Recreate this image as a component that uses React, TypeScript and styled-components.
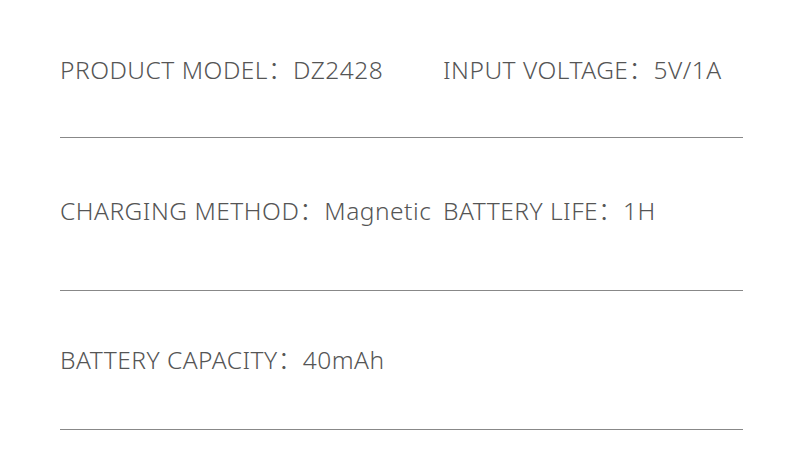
import React from "react";
import styled, { createGlobalStyle } from "styled-components";

const Global = createGlobalStyle`
  html, body { margin: 0; padding: 0; background: #ffffff; }
  body { width: 800px; height: 450px; overflow: hidden; }
`;

const Page = styled.div`
  width: 800px;
  height: 450px;
  box-sizing: border-box;
  padding: 0 57px 0 60px;
  display: flex;
  flex-direction: column;
  font-family: "Noto Sans", "Noto Sans CJK SC", sans-serif;
  color: #555555;
`;

const Row = styled.div<{ $top: number; $bottom: number }>`
  display: grid;
  grid-template-columns: 383px 1fr;
  padding-top: ${(p) => p.$top}px;
  padding-bottom: ${(p) => p.$bottom}px;
  border-bottom: 1.5px solid #888888;
`;

const Item = styled.div`
  font-size: 24.5px;
  line-height: 30px;
  letter-spacing: 0.5px;
  font-weight: 300;
  white-space: nowrap;
`;

const rows = [
  { top: 55, bottom: 52, items: ["PRODUCT MODEL：DZ2428", "INPUT VOLTAGE：5V/1A"] },
  { top: 58, bottom: 64, items: ["CHARGING METHOD：Magnetic", "BATTERY LIFE：1H"] },
  { top: 54, bottom: 54, items: ["BATTERY CAPACITY：40mAh"] },
];

export default function App() {
  return (
    <>
      <Global />
      <Page>
        {rows.map((r, i) => (
          <Row key={i} $top={r.top} $bottom={r.bottom}>
            {r.items.map((t) => (
              <Item key={t}>{t}</Item>
            ))}
          </Row>
        ))}
      </Page>
    </>
  );
}
